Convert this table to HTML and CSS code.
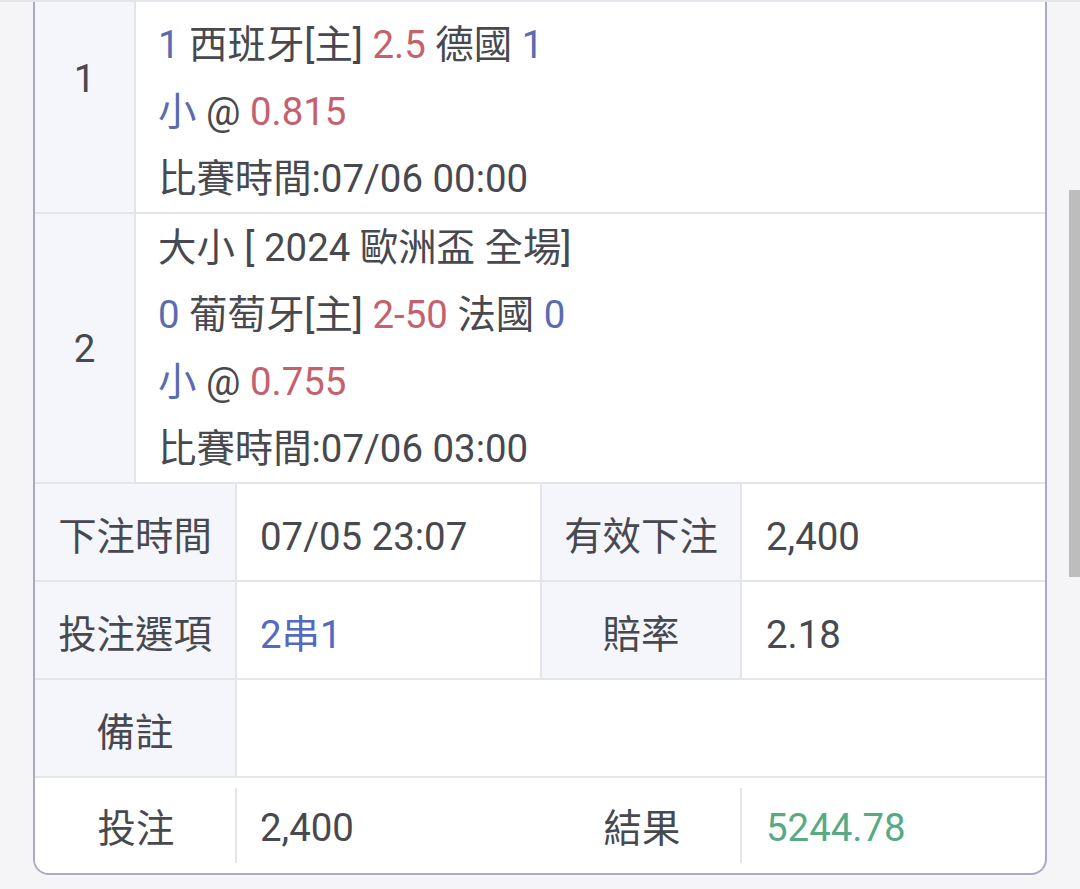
FILE: index.html
```html
<!DOCTYPE html>
<html lang="zh-Hant">
<head>
<meta charset="utf-8">
<link rel="stylesheet" href="styles.css">
</head>
<body>
<div class="topline"></div>
<div class="scrollbar"></div>
<div class="card">
  <div class="leg">
    <div class="leg-no">1</div>
    <div class="leg-body">
      <div class="line">大小 [ 2024 歐洲盃 全場]</div>
      <div class="line"><span class="blue">1</span> 西班牙[主] <span class="red">2.5</span> 德國 <span class="blue">1</span></div>
      <div class="line"><span class="blue">小</span> @ <span class="red">0.815</span></div>
      <div class="line">比賽時間:07/06 00:00</div>
    </div>
  </div>
  <div class="leg">
    <div class="leg-no">2</div>
    <div class="leg-body">
      <div class="line">大小 [ 2024 歐洲盃 全場]</div>
      <div class="line"><span class="blue">0</span> 葡萄牙[主] <span class="red">2-50</span> 法國 <span class="blue">0</span></div>
      <div class="line"><span class="blue">小</span> @ <span class="red">0.755</span></div>
      <div class="line">比賽時間:07/06 03:00</div>
    </div>
  </div>
  <div class="info">
    <div class="row">
      <div class="label">下注時間</div>
      <div class="value">07/05 23:07</div>
      <div class="label">有效下注</div>
      <div class="value">2,400</div>
    </div>
    <div class="row">
      <div class="label">投注選項</div>
      <div class="value link">2串1</div>
      <div class="label">賠率</div>
      <div class="value">2.18</div>
    </div>
    <div class="row">
      <div class="label">備註</div>
      <div class="value wide"></div>
    </div>
    <div class="row total">
      <div class="label">投注</div>
      <div class="value">2,400</div>
      <div class="label">結果</div>
      <div class="value green">5244.78</div>
    </div>
  </div>
</div>
</body>
</html>
```

FILE: styles.css
```css
html, body {
  margin: 0;
  padding: 0;
  background: #f5f5f7;
  overflow: hidden;
}

body {
  font-family: Roboto, "Noto Sans CJK TC", "Noto Sans", sans-serif;
  font-size: 38.4px;
  color: #47494f;
}

.topline {
  position: fixed;
  top: 0;
  left: 0;
  right: 0;
  height: 2px;
  background: #e4e5eb;
  z-index: 5;
}

.scrollbar {
  position: fixed;
  top: 190px;
  right: 0;
  width: 11px;
  height: 387px;
  background: #bdbdbd;
  z-index: 5;
}

.card {
  margin: -56px 0 0 33px;
  width: 1010px;
  border: 2px solid #a9abc3;
  border-top: none;
  border-radius: 0 0 16px 16px;
  background: #ffffff;
  overflow: hidden;
}

.leg {
  display: flex;
  border-bottom: 2px solid #e3e5eb;
}

.leg-no {
  width: 99px;
  flex: none;
  display: flex;
  align-items: center;
  justify-content: center;
  background: #f5f6fb;
  border-right: 2px solid #e3e5eb;
}

.leg-body {
  flex: 1;
  padding-left: 22px;
}

.line {
  height: 67px;
  line-height: 67px;
  white-space: nowrap;
}

.blue { color: #5a6bb0; }
.red { color: #c4616d; }
.link { color: #5468c4; }
.green { color: #58aa85; }

.row {
  display: grid;
  grid-template-columns: 202px 305px 200px 1fr;
  height: 96px;
  border-bottom: 2px solid #e3e5eb;
}

.row > div {
  box-sizing: border-box;
  padding-top: 10px;
  line-height: 86px;
  white-space: nowrap;
}

.label {
  text-align: center;
  background: #f5f6fb;
  border-right: 2px solid #e3e5eb;
}

.value {
  padding-left: 23px;
  border-right: 2px solid #e3e5eb;
}

.value:last-child {
  border-right: none;
  padding-left: 24px;
}

.value.wide {
  grid-column: 2 / 5;
}

.row.total {
  border-bottom: none;
  height: 95px;
}

.row.total > div {
  padding-top: 6px;
  line-height: 89px;
}

.row.total .label {
  background: #ffffff;
  border-right: none;
}

.row.total .value {
  border-right: none;
  border-left: 2px solid #e3e5eb;
  margin: 10px 0 10px -2px;
  padding-top: 4px;
  line-height: 71px;
  height: 75px;
}

.row.total .value:last-child {
  padding-left: 24px;
}
```
